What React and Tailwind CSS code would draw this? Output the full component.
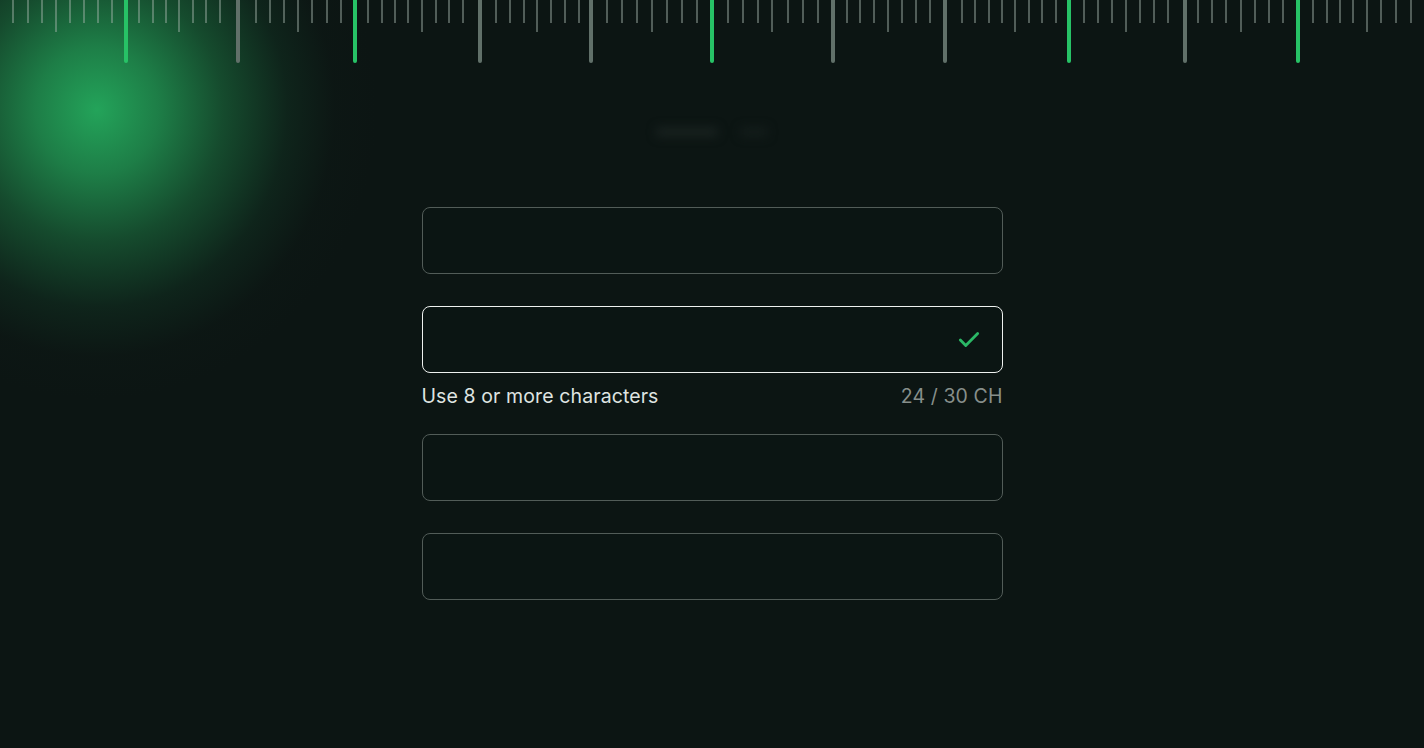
import React from "react";

const majors = [
  { x: 126, g: true },
  { x: 238, g: false },
  { x: 354.5, g: true },
  { x: 480, g: false },
  { x: 591, g: false },
  { x: 712, g: true },
  { x: 833, g: false },
  { x: 945, g: false },
  { x: 1069, g: true },
  { x: 1184.5, g: false },
  { x: 1297.5, g: true },
];

const smalls = [
  13, 27.7, 41.7, [55.7], 70, 84.3, 98.3, 112,
  139, 152.7, 166, [179.3], 192.7, 206.3, 219.7,
  255.7, 270, 284, [298.3], 312.3, 326.7, 340.7,
  368.3, 381.7, 394.7, 408, [421.7], 435.7, 449.3, 462.7,
  496, 510, 523.7, [537.3], 550.7, 564.7, 578.7,
  607.3, 622.3, 637.3, [652.3], 667.3, 682.3, 697.3,
  727.7, 742.7, 757.7, [772.3], 787.7, 802.7, 817.7,
  846.7, 860.3, 874, [887.7], 902, 916, 930,
  961.7, 975, 988.7, 1001.7, [1015.3], 1028.7, 1042, 1055.7,
  1084, 1098, 1112, [1126], 1140, 1154, 1168,
  1198, 1212, 1226.3, [1240.7], 1254.7, 1268.7, 1282.7,
  1313.3, 1327, 1340, 1353, [1366.7], 1381.3, 1395.7, 1410.7,
];

function Ruler() {
  return (
    <div className="absolute left-0 top-0 h-16 w-full">
      {smalls.map((s, i) => {
        const long = Array.isArray(s);
        const x = long ? s[0] : s;
        return (
          <div
            key={i}
            className={
              long
                ? "absolute top-0 h-[32px] w-[2px] bg-[#a6b5ae]/45"
                : "absolute top-0 h-[23px] w-[2px] bg-[#a6b5ae]/45"
            }
            style={{ left: Math.round(x) - 1 }}
          />
        );
      })}
      {majors.map((m, i) => (
        <div
          key={"m" + i}
          className={
            m.g
              ? "absolute top-0 h-[63px] w-[4px] rounded-b-full bg-[#27c266]"
              : "absolute top-0 h-[63px] w-[4px] rounded-b-full bg-[#617069]"
          }
          style={{ left: Math.round(m.x) - 2 }}
        />
      ))}
    </div>
  );
}

function Field({ active }) {
  return (
    <div
      className={
        active
          ? "flex h-[67px] w-[581px] items-center justify-end rounded-[8px] border-[1.5px] border-[#eef1ef] bg-[#0b1513] pr-[20px]"
          : "flex h-[67px] w-[581px] items-center justify-end rounded-[8px] border-[1.5px] border-[#525c58] bg-[#0b1513] pr-[20px]"
      }
    >
      {active && (
        <svg
          width="26"
          height="26"
          viewBox="0 0 24 24"
          fill="none"
          stroke="#2bb866"
          strokeWidth="2.6"
          strokeLinecap="round"
          strokeLinejoin="round"
        >
          <path d="M20 6 9 17l-5-5" />
        </svg>
      )}
    </div>
  );
}

export default function App() {
  return (
    <div
      className="relative h-[748px] w-full overflow-hidden bg-[#0c1513]"
      style={{ fontFamily: "Inter, 'Noto Sans', sans-serif" }}
    >
      <div className="pointer-events-none absolute inset-0 bg-[radial-gradient(ellipse_280px_290px_at_97px_110px,rgba(36,168,92,0.97)_0%,rgba(34,152,84,0.8)_22%,rgba(30,125,70,0.52)_45%,rgba(22,80,50,0.26)_68%,rgba(16,40,30,0.08)_85%,rgba(12,21,19,0)_100%)]" />
      <Ruler />
      <div className="relative flex flex-col items-center pt-[124px]">
        <div className="flex h-[16px] items-center gap-[22px] blur-[5px]">
          <div className="h-[10px] w-[62px] rounded bg-[#18211f]" />
          <div className="h-[10px] w-[28px] rounded bg-[#131c1a]" />
        </div>
        <div className="mt-[67px] flex w-[581px] flex-col">
          <Field />
          <div className="mt-[32px]">
            <Field active />
          </div>
          <div className="mt-[11px] flex h-[24px] items-center justify-between text-[19.5px] leading-[24px] tracking-[0.1px]">
            <span className="text-[#dfe4e1]">Use 8 or more characters</span>
            <span className="text-[#878f8b]">24 / 30 CH</span>
          </div>
          <div className="mt-[26px]">
            <Field />
          </div>
          <div className="mt-[32px]">
            <Field />
          </div>
        </div>
      </div>
    </div>
  );
}
